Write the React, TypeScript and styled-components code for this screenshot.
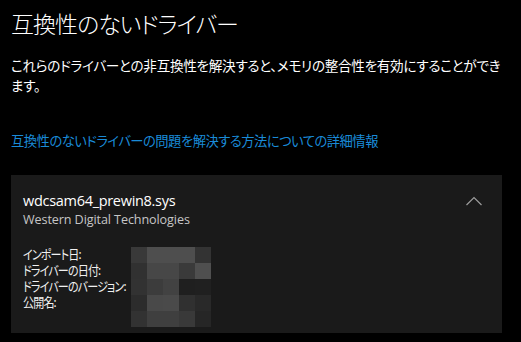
import styled, { createGlobalStyle } from 'styled-components';

const GlobalStyle = createGlobalStyle`
	html, body {
		margin: 0;
		background: #000;
	}
	body {
		font-family: 'Noto Sans CJK JP', 'Noto Sans', sans-serif;
		color: #fff;
	}
`;

const Page = styled.div`
	width: 521px;
	height: 342px;
	padding: 7px 6px 0 11px;
	box-sizing: border-box;
	overflow: hidden;
	font-feature-settings: 'palt';
`;

const Title = styled.h1`
	margin: 0;
	font-size: 23px;
	font-weight: 300;
	line-height: 32px;
	letter-spacing: -1px;
`;

const Description = styled.p`
	margin: 16px 0 0;
	max-width: 500px;
	font-size: 13.6px;
	line-height: 20px;
	color: #fff;
	letter-spacing: -0.3px;
`;

const Link = styled.a`
	display: block;
	margin-top: 36px;
	font-size: 13.3px;
	line-height: 20px;
	color: #1a8bd8;
	text-decoration: none;
	letter-spacing: -0.5px;
`;

const Card = styled.section`
	margin-top: 24px;
	margin-right: 13px;
	background: #1a1a1a;
	height: 158px;
	padding: 16px 12px 0 12px;
	box-sizing: border-box;
	display: flex;
	justify-content: space-between;
`;

const Info = styled.div`
	display: flex;
	flex-direction: column;
`;

const FileName = styled.div`
	font-family: 'Open Sans', 'Noto Sans', sans-serif;
	font-size: 14.5px;
	line-height: 20px;
	letter-spacing: -0.3px;
`;

const Vendor = styled.div`
	font-family: 'Open Sans', 'Noto Sans', sans-serif;
	font-size: 12.6px;
	line-height: 18px;
	color: #c6c6c6;
	letter-spacing: -0.1px;
`;

const Details = styled.div`
	margin-top: 16px;
	display: flex;
`;

const Labels = styled.div`
	width: 108px;
	display: flex;
	flex-direction: column;
	padding-top: 1px;
`;

const Label = styled.span`
	display: block;
	font-size: 13px;
	line-height: 16px;
	height: 16px;
	color: #f0f0f0;
	white-space: nowrap;
	letter-spacing: -1px;
	transform: scaleX(0.85);
	transform-origin: left center;
`;

const Mosaic = styled.div`
	display: grid;
	grid-template-columns: repeat(5, 16px);
	grid-auto-rows: 16px;
	margin-top: 2px;
`;

const Cell = styled.div<{ $c: string }>`
	background: ${(p) => p.$c};
`;

const Chevron = styled.button`
	background: none;
	border: none;
	padding: 0;
	margin: 5px 7px 0 0;
	width: 18px;
	height: 12px;
	display: flex;
	cursor: pointer;
`;

const mosaic = [
	['#393939', '#4e4e4e', '#4e4e4e', '#4e4e4e', '#333333'],
	['#313131', '#474747', '#474747', '#3a3a3a', '#4f4f4f'],
	['#323232', '#3c3c3c', '#424242', '#1f1f1f', '#202020'],
	['#2c2c2c', '#494949', '#4a4a4a', '#303030', '#292929'],
	['#323232', '#3f3f3f', '#3f3f3f', '#393939', '#262626'],
];

const labels = ['インポート日:', 'ドライバーの日付:', 'ドライバーのバージョン:', '公開名:'];

export default function App() {
	return (
		<>
			<GlobalStyle />
			<Page>
				<Title>互換性のないドライバー</Title>
				<Description>
					これらのドライバーとの非互換性を解決すると、メモリの整合性を有効にすることができます。
				</Description>
				<Link href="#">互換性のないドライバーの問題を解決する方法についての詳細情報</Link>
				<Card>
					<Info>
						<FileName>wdcsam64_prewin8.sys</FileName>
						<Vendor>Western Digital Technologies</Vendor>
						<Details>
							<Labels>
								{labels.map((l) => (
									<Label key={l}>{l}</Label>
								))}
							</Labels>
							<Mosaic>
								{mosaic.flat().map((c, i) => (
									<Cell key={i} $c={c} />
								))}
							</Mosaic>
						</Details>
					</Info>
					<Chevron aria-label="折りたたむ">
						<svg width="18" height="10" viewBox="0 0 18 10">
							<path d="M1.5 9 L9 1.5 L16.5 9" fill="none" stroke="#9c9c9c" strokeWidth="1.2" />
						</svg>
					</Chevron>
				</Card>
			</Page>
		</>
	);
}
